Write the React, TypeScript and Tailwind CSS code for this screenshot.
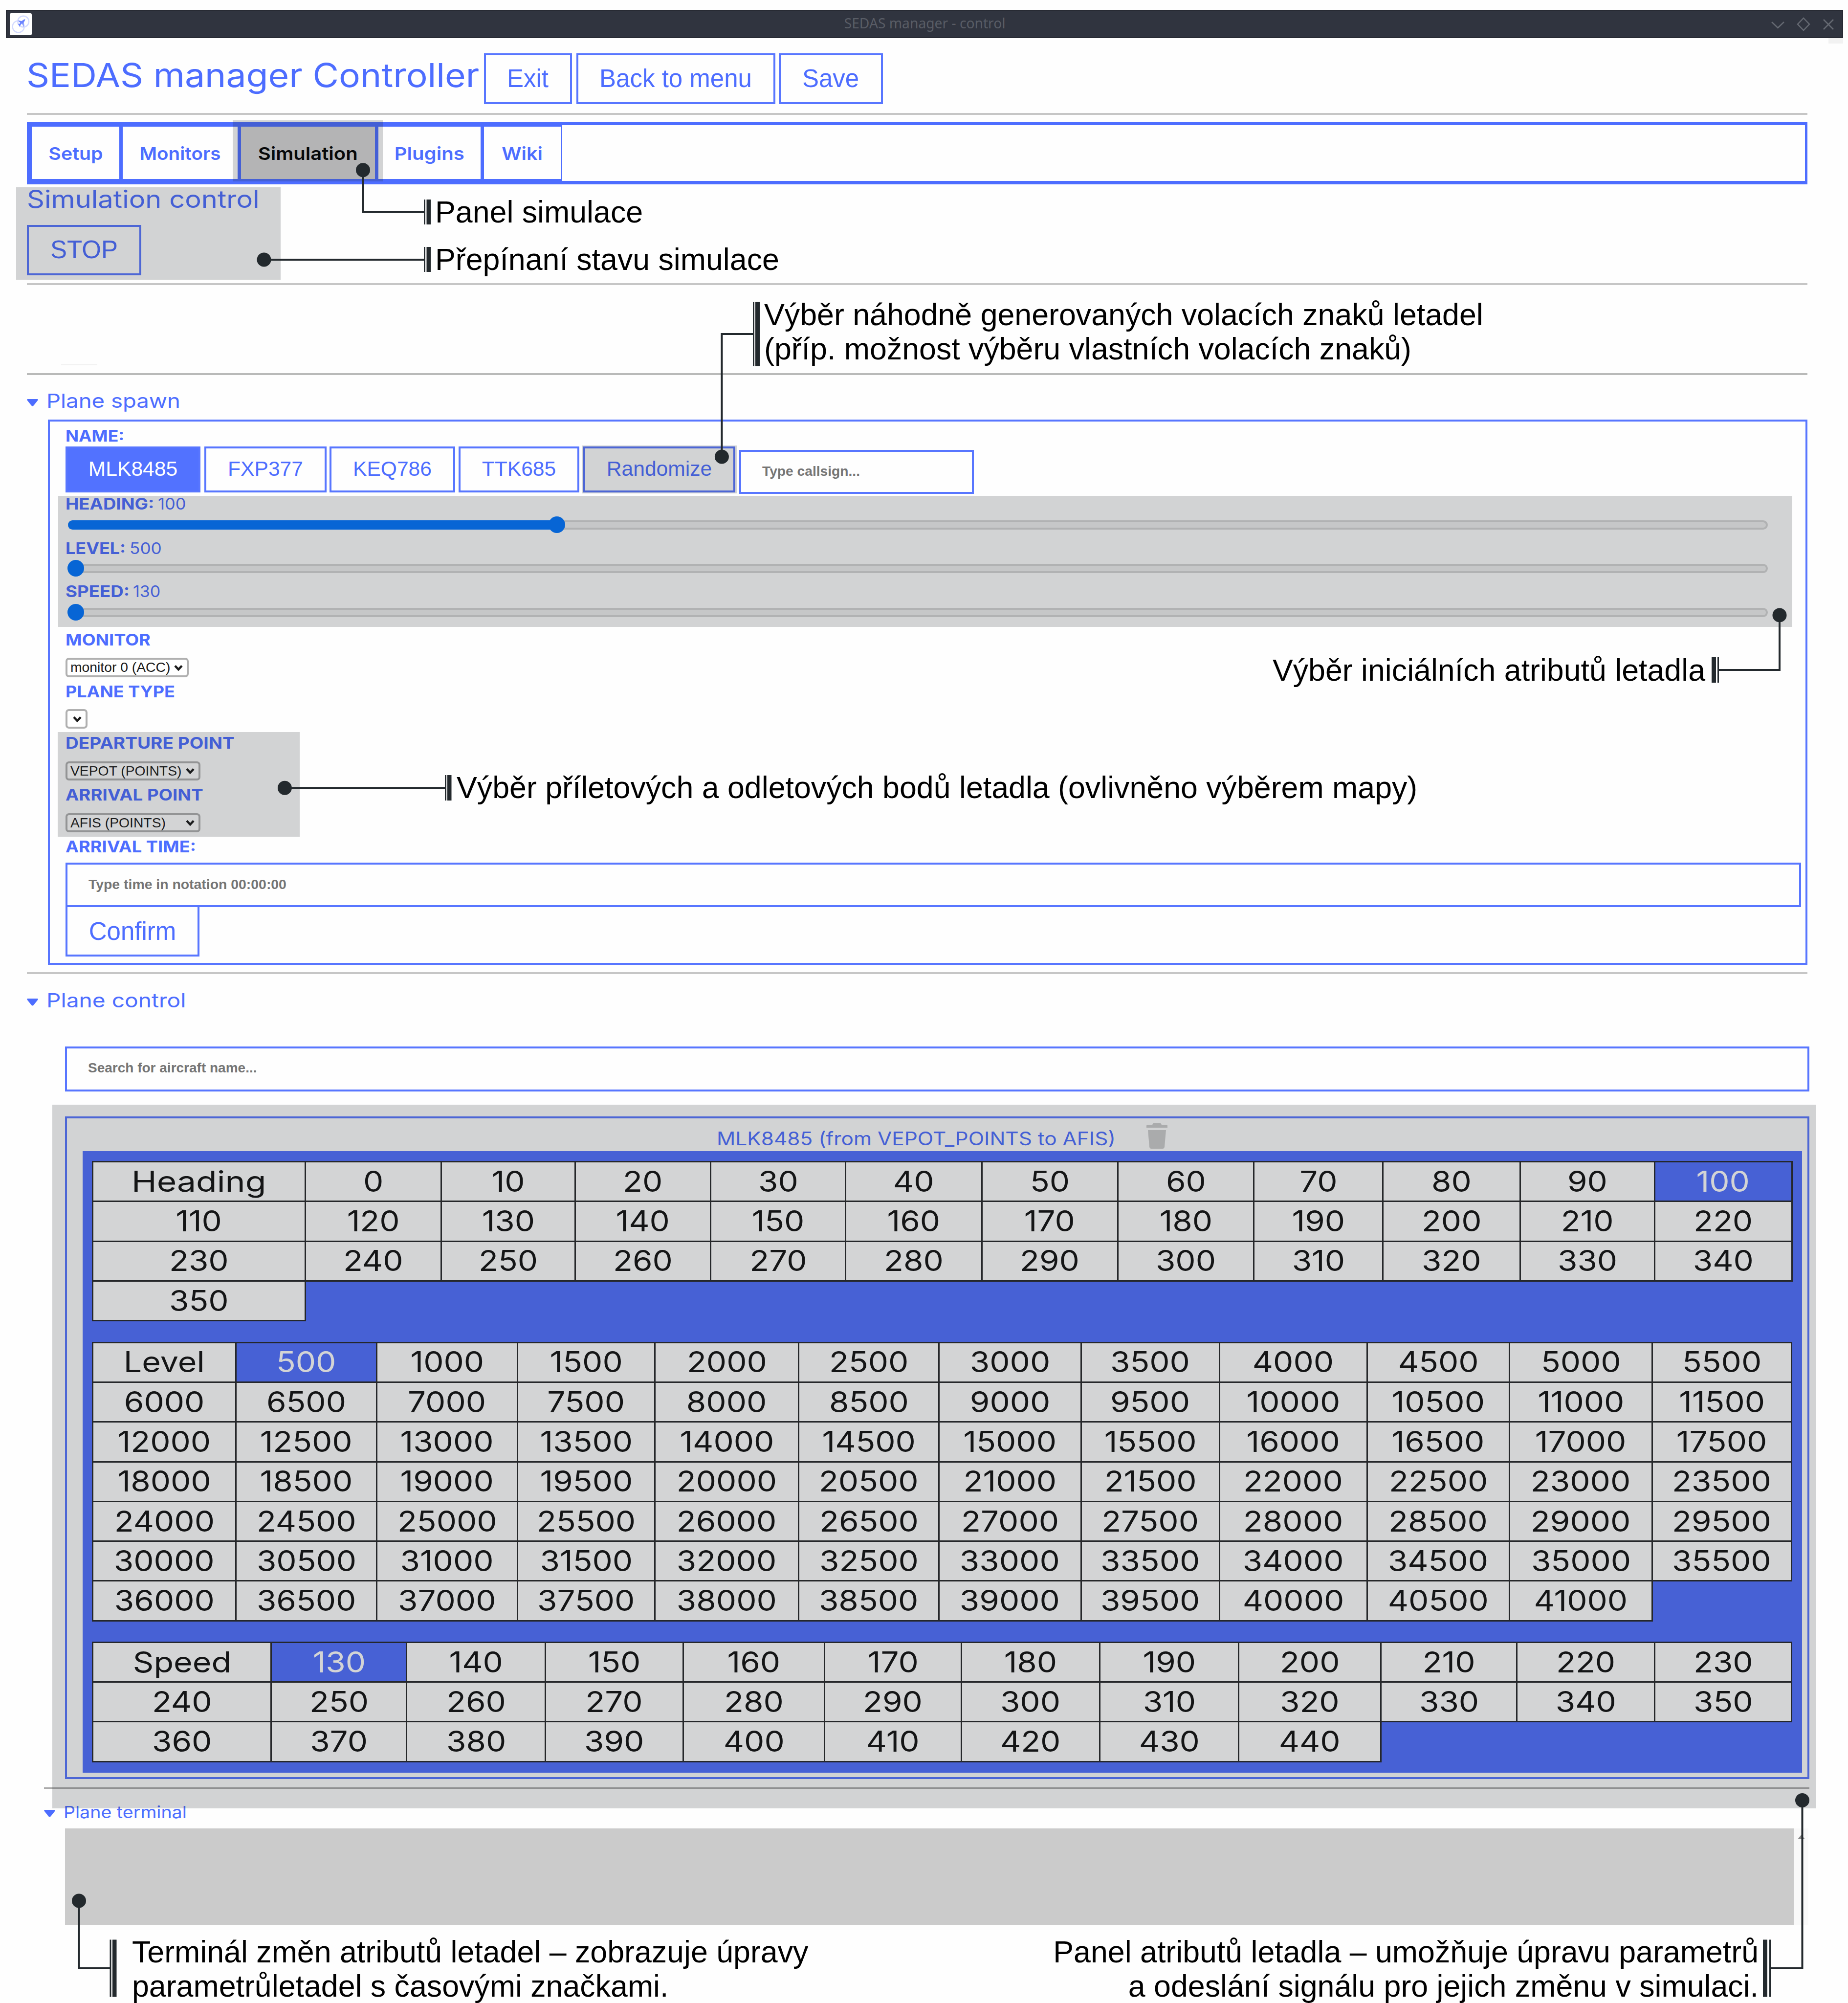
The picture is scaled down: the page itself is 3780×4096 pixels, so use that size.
import React from 'react';

const HEADING = ['Heading', ...Array.from({ length: 36 }, (_, i) => String(i * 10))];
const LEVEL = ['Level', ...Array.from({ length: 82 }, (_, i) => String(500 + i * 500))];
const SPEED = ['Speed', ...Array.from({ length: 32 }, (_, i) => String(130 + i * 10))];

function Rule({ className = 'bg-[#c6c6c6]' }: { className?: string }) {
  return <div className={`ml-[55px] h-[4px] w-[3642px] shrink-0 ${className}`} />;
}

function Button({ className = '', children }: { className?: string; children: React.ReactNode }) {
  return (
    <button
      className={`flex shrink-0 items-center justify-center border-4 border-[#5876ff] font-['Liberation_Sans',Arial,sans-serif] whitespace-nowrap ${className}`}
    >
      {children}
    </button>
  );
}

function Tab({ label, className = '', textClass }: { label: string; className?: string; textClass: string }) {
  return (
    <div
      className={`flex shrink-0 items-center justify-center border-t-3 border-r-3 border-b-4 border-l-4 border-[#4d6dff] pt-[3px] text-[36px] font-semibold ${className}`}
    >
      <span className={textClass}>{label}</span>
    </div>
  );
}

function Summary({ label, textClass, className }: { label: string; textClass: string; className: string }) {
  return (
    <div className={`flex shrink-0 items-center whitespace-nowrap text-[#4d6dff] ${className}`}>
      <svg className="mt-[6px] h-[15px] w-[23px] shrink-0" viewBox="0 0 23 15">
        <path d="M2 0H21Q24 0 22 3L14 13Q11.500 16 9 13L1 3Q-1 0 2 0Z" fill="#4d6dff" />
      </svg>
      <span className={`ml-[17px] origin-left ${textClass}`}>{label}</span>
    </div>
  );
}

function Label({ name, value, className = '', nameClass = 'w-[400px] scale-x-[1.13]', valueClass = '' }: {
  name: string; value?: string; className?: string; nameClass?: string; valueClass?: string;
}) {
  return (
    <div className={`flex h-[40px] shrink-0 text-[32px] leading-[42px] whitespace-nowrap text-[#4d6dff] ${className}`}>
      <span className={`origin-left font-bold ${nameClass}`}>{name}</span>
      {value && <span className={`origin-left ${valueClass}`}>{value}</span>}
    </div>
  );
}

function Slider({ className = '', fillClass, thumbClass }: { className?: string; fillClass: string; thumbClass: string }) {
  return (
    <div className={`relative ml-[5px] flex h-[36px] w-[3477px] shrink-0 items-center ${className}`}>
      <div className="h-[19px] w-full rounded-full border-4 border-[#d5d5d5] bg-[#efefef]" />
      <div className={`absolute left-0 h-[19px] rounded-full bg-[#0075ff] ${fillClass}`} />
      <div className={`absolute top-[1px] size-[34px] rounded-full bg-[#0075ff] ${thumbClass}`} />
    </div>
  );
}

function Select({ label = '', className = '' }: { label?: string; className?: string }) {
  return (
    <div
      className={`flex shrink-0 items-center justify-between rounded-[7px] border-4 border-[#b0b0b0] bg-white pr-[8px] pl-[6px] font-['Liberation_Sans',Arial,sans-serif] text-[28.300px] leading-[30px] whitespace-nowrap text-[#1a1a1a] ${className}`}
    >
      <span className="pb-[2px]">{label}</span>
      <svg className="mt-[1px] h-[14px] w-[18px]" viewBox="0 0 18 14" fill="none" stroke="#1a1a1a" strokeWidth="4.500">
        <path d="M2 2.500L9 10L16 2.500" />
      </svg>
    </div>
  );
}

function ValueGrid({ items, selected, className }: { items: string[]; selected: string; className: string }) {
  return (
    <div className={`ml-[19px] grid w-max shrink-0 ${className}`}>
      {items.map((v, i) => (
        <div
          key={v}
          className={`-mr-[3px] -mb-[3px] flex items-center justify-center border-3 border-[#26272a] pb-px text-[59px] leading-[70px] ${
            v === selected ? 'bg-[#5070ff] text-white' : 'bg-white text-[#111]'
          }`}
        >
          <span className={i === 0 ? (v === 'Heading' ? 'scale-x-[1.180]' : 'scale-x-[1.125]') : 'scale-x-[1.110]'}>{v}</span>
        </div>
      ))}
    </div>
  );
}

function Shade({ className }: { className: string }) {
  return <div className={`absolute bg-[#23292d]/20 ${className}`} />;
}

function Note({ className, children }: { className: string; children: React.ReactNode }) {
  return (
    <div className={`absolute font-['Liberation_Sans',Arial,sans-serif] text-[62.700px] leading-[70px] whitespace-nowrap text-black ${className}`}>
      {children}
    </div>
  );
}

function Callouts() {
  return (
    <svg className="absolute inset-0 h-[4096px] w-[3780px]" viewBox="0 0 3780 4096" fill="none" stroke="#23292d" strokeWidth="4">
      <g fill="#23292d" stroke="none">
        <circle cx="742.500" cy="347.700" r="14.500" />
        <circle cx="540" cy="531" r="14.500" />
        <circle cx="1476.400" cy="934" r="14.500" />
        <circle cx="3640" cy="1258" r="14.500" />
        <circle cx="582.400" cy="1611.300" r="14.500" />
        <circle cx="161.500" cy="3887" r="14.500" />
        <circle cx="3686.500" cy="3681.500" r="14.500" />
        <path d="M872.500 408h8.500v51h-8.500zM872.500 505h8.500v51h-8.500zM1545 617.500h9V749h-9zM3501 1344h9v52h-9zM915 1585h8.500v52H915zM230 3966.500h8.500v117H230zM3606 3966.500h9v117h-9z" />
        <path d="M867 408h3v51h-3zM867 505h3v51h-3zM1540 617.500h3V749h-3zM3513 1344h3v52h-3zM910 1585h3v52h-3zM224.500 3966.500h3v117h-3zM3619 3966.500h3v117h-3z" />
      </g>
      <path d="M742.500 348V433.500H868" />
      <path d="M540 531H868" />
      <path d="M1476.400 934V683H1541" />
      <path d="M3640 1258V1370H3515" />
      <path d="M582 1611.300H911" />
      <path d="M161.500 3887V4025H225" />
      <path d="M3686.500 3681V4025H3621" />
    </svg>
  );
}

export default function App() {
  return (
    <div className="relative flex h-[4096px] w-[3780px] flex-col overflow-hidden bg-[#fefefe] font-['Inter',sans-serif] text-[#4d6dff]">
      {/* Window title bar */}
      <div className="relative mt-[20px] ml-[12px] flex h-[58px] w-[3758px] shrink-0 items-center justify-between bg-[#30343f] shadow-[inset_0_0_0_2px_#272a33]">
        <svg className="ml-[8px] size-[45px]" viewBox="32 36 143 143">
          <rect x="32" y="36" width="143" height="143" rx="10" fill="#fff" />
          <g fill="none" stroke="#d3daff" strokeWidth="8">
            <circle cx="120" cy="90" r="36" />
            <circle cx="88" cy="123" r="38" />
          </g>
          <path d="M132 74L122 78L108 88L84 84L100 98L94 106L82 104L92 113L96 126L102 112L112 102L122 128L122 98L130 84Z" fill="#6b83ff" />
        </svg>
        <div className="ml-[96px] scale-x-[.99] pb-[4px] font-['Noto_Sans',sans-serif] text-[28.500px] leading-[58px] whitespace-nowrap text-[#595d66]">
          SEDAS manager - control
        </div>
        <svg className="mr-[18px] h-[28px] w-[130px]" viewBox="0 0 130 28" fill="none" stroke="#666a73" strokeWidth="2.500">
          <path d="M2 10L14.500 22L27 10" />
          <path d="M67 2L79 14.500L67 27L55 14.500Z" />
          <path d="M108 5L128 25M128 5L108 25" />
        </svg>
        <div className="absolute top-[58px] right-0 h-[11px] w-[30px] bg-[#f2f2f2]" />
      </div>

      {/* Page header */}
      <div className="mt-[31px] ml-[54px] flex h-[104px] shrink-0 items-start">
        <h1 className="w-[935.500px] shrink-0 text-[67.500px] leading-[90px] whitespace-nowrap">
          <span className="inline-block origin-left scale-x-[1.086]">SEDAS manager Controller</span>
        </h1>
        <Button className="h-[104px] w-[180px] text-[51px]">Exit</Button>
        <Button className="ml-[9px] h-[104px] w-[407px] text-[51px]">Back to menu</Button>
        <Button className="ml-[7px] h-[104px] w-[213px] text-[51px]">Save</Button>
      </div>
      <Rule className="mt-[18px] bg-[#c6c6c6]" />

      {/* Tabs */}
      <div className="mt-[15px] ml-[55px] flex h-[127px] w-[3642px] shrink-0 border-t-6 border-r-5 border-b-7 border-l-6 border-[#4d6dff]">
        <Tab label="Setup" className="w-[186px]" textClass="scale-x-[1.091]" />
        <Tab label="Monitors" className="w-[242px]" textClass="scale-x-[1.071]" />
        <Tab label="Simulation" className="w-[281px] bg-[#d9d7d7] text-black" textClass="scale-x-[1.111]" />
        <Tab label="Plugins" className="w-[216px]" textClass="scale-x-[1.114]" />
        <Tab label="Wiki" className="w-[164px]" textClass="scale-x-[1.099]" />
      </div>

      {/* Simulation control */}
      <h2 className="ml-[55px] h-[60px] shrink-0 text-[50px] leading-[60px] whitespace-nowrap">
        <span className="inline-block origin-left scale-x-[1.121]">Simulation control</span>
      </h2>
      <Button className="mt-[23px] ml-[55px] h-[103px] w-[234px] text-[51px]">STOP</Button>
      <Rule className="mt-[16px] bg-[#c6c6c6]" />
      <div className="mt-[162px] ml-[125px] h-[2px] w-[74px] shrink-0 bg-[#f0f0f0]" />
      <Rule className="mt-[16px] bg-[#b9bab9]" />

      {/* Plane spawn */}
      <Summary label="Plane spawn" className="mt-[23px] ml-[55px] h-[60px] text-[40px] leading-[60px]" textClass="scale-x-[1.138]" />
      <div className="mt-[8px] ml-[98px] flex h-[1115px] w-[3599px] shrink-0 flex-col border-4 border-[#5876ff] pl-[32px]">
        <Label name="NAME:" className="mt-[9px]" nameClass="scale-x-[1.110]" />
        <div className="mt-[2px] flex h-[97px] shrink-0 text-[42.600px]">
          <Button className="h-[94px] w-[276px] bg-[#5272ff] pb-[2px] text-white">MLK8485</Button>
          <Button className="ml-[8px] h-[94px] w-[250px] pb-[2px]">FXP377</Button>
          <Button className="ml-[6px] h-[94px] w-[257px] pb-[2px]">KEQ786</Button>
          <Button className="ml-[7px] h-[94px] w-[247px] pb-[2px]">TTK685</Button>
          <Button className="ml-[8px] h-[94px] w-[311px] pb-[2px]">Randomize</Button>
          <div className="mt-[7px] ml-[8px] flex h-[90px] w-[480px] items-center border-4 border-[#5876ff] pb-[3px] pl-[43px] font-['Liberation_Sans',Arial,sans-serif] text-[28.200px] font-bold text-[#757575]">
            Type callsign...
          </div>
        </div>
        <Label name="HEADING:" value="100" nameClass="w-[189px] scale-x-[1.144]" valueClass="scale-x-[1.074]" />
        <Slider className="mt-[5px]" fillClass="w-[1000px]" thumbClass="left-[983px]" />
        <Label name="LEVEL:" value="500" className="mt-[10px]" nameClass="w-[131px] scale-x-[1.123]" valueClass="scale-x-[1.100]" />
        <Slider className="mt-[3px]" fillClass="w-[15px]" thumbClass="-left-[1px]" />
        <Label name="SPEED:" value="130" className="mt-[9px]" nameClass="w-[138px] scale-x-[1.146]" valueClass="scale-x-[1.063]" />
        <Slider className="mt-[5px]" fillClass="w-[15px]" thumbClass="-left-[1px]" />
        <Label name="MONITOR" className="mt-[18px]" />
        <Select label="monitor 0 (ACC)" className="mt-[17px] h-[40px] w-[252px]" />
        <Label name="PLANE TYPE" className="mt-[9px]" nameClass="w-[400px] scale-x-[1.123]" />
        <Select className="mt-[16px] h-[40px] w-[45px]" />
        <Label name="DEPARTURE POINT" className="mt-[9px]" nameClass="w-[400px] scale-x-[1.158]" />
        <Select label="VEPOT (POINTS)" className="mt-[18px] h-[39px] w-[276px]" />
        <Label name="ARRIVAL POINT" className="mt-[9px]" nameClass="w-[400px] scale-x-[1.145]" />
        <Select label="AFIS (POINTS)" className="mt-[18px] h-[39px] w-[276px]" />
        <Label name="ARRIVAL TIME:" className="mt-[9px]" nameClass="w-[400px] scale-x-[1.130]" />
        <div className="mt-[13px] flex h-[91px] w-[3550px] shrink-0 items-center border-4 border-[#5876ff] pb-[3px] pl-[43px] font-['Liberation_Sans',Arial,sans-serif] text-[28.400px] font-bold text-[#757575]">
          Type time in notation 00:00:00
        </div>
        <Button className="-mt-[4px] h-[105px] w-[274px] pt-[3px] text-[51px]">Confirm</Button>
      </div>
      <Rule className="mt-[15px] bg-[#c6c6c6]" />

      {/* Plane control */}
      <Summary label="Plane control" className="mt-[24px] ml-[55px] h-[60px] text-[40px] leading-[60px]" textClass="scale-x-[1.153]" />
      <div className="mt-[64px] ml-[133px] flex h-[92px] w-[3568px] shrink-0 items-center border-4 border-[#5876ff] pb-[4px] pl-[43px] font-['Liberation_Sans',Arial,sans-serif] text-[28px] font-bold text-[#757575]">
        <span className="origin-left">Search for aircraft name...</span>
      </div>
      <div className="mt-[51px] ml-[133px] flex h-[1355px] w-[3568px] shrink-0 flex-col border-4 border-[#5876ff]">
        <div className="flex h-[67px] shrink-0 items-start pl-[1329px]">
          <div className="mt-[21px] w-[879px] text-[38px] leading-[40px] whitespace-nowrap">
            <span className="inline-block origin-left scale-x-[1.115]">MLK8485 (from VEPOT_POINTS to AFIS)</span>
          </div>
          <svg className="mt-[10px] h-[52px] w-[43px]" viewBox="0 0 43 52" fill="#ccc">
            <path d="M0 9V5Q0 3 2 3H12L14 0H29L31 3H41Q43 3 43 5V9ZM3 14H40L37 48Q36.500 52 33 52H10Q6.500 52 6 48Z" />
          </svg>
        </div>
        <div className="ml-[32px] flex h-[1271px] w-[3517px] shrink-0 flex-col gap-[44.500px] bg-[#5070ff] pt-[20px]">
          <ValueGrid
            items={HEADING}
            selected="100"
            className="auto-rows-[81.300px] grid-cols-[434.5px_278.5px_274px_277px_276px_278.5px_278.5px_278px_264px_281px_274.5px_281px]"
          />
          <ValueGrid
            items={LEVEL}
            selected="500"
            className="auto-rows-[81.300px] grid-cols-[293px_288px_288px_281px_294px_287px_290.5px_283.5px_301.5px_291.5px_292px_284.5px]"
          />
          <ValueGrid
            items={SPEED}
            selected="130"
            className="auto-rows-[81.100px] grid-cols-[365.3px_277.2px_283.3px_282px_289.3px_279.6px_283.3px_284.5px_290.5px_278.4px_282.1px_279.6px]"
          />
        </div>
      </div>
      <div className="mt-[17px] ml-[90px] h-[3px] w-[3611px] shrink-0 bg-[#aaaaaa]" />

      {/* Plane terminal */}
      <Summary label="Plane terminal" className="mt-[22px] ml-[90px] h-[50px] text-[34px] leading-[51px]" textClass="scale-x-[1.105]" />
      <div className="mt-[9px] ml-[133px] flex h-[198px] w-[3566px] shrink-0 justify-between bg-[#cbcbcb]">
        <div />
        <div className="flex w-[30px] justify-center bg-[#f9f9f9] pt-[13px]">
          <svg className="h-[9px] w-[15px]" viewBox="0 0 15 9">
            <path d="M7.500 0L15 9H0Z" fill="#8a8a8a" />
          </svg>
        </div>
      </div>

      {/* Highlighted areas */}
      <Shade className="top-[246px] left-[476px] h-[125px] w-[307px]" />
      <Shade className="top-[383px] left-[33px] h-[189px] w-[541px]" />
      <Shade className="top-[911px] left-[1190px] h-[98px] w-[318px]" />
      <Shade className="top-[1014px] left-[119px] h-[268px] w-[3547px]" />
      <Shade className="top-[1497px] left-[118px] h-[214px] w-[495px]" />
      <Shade className="top-[2259px] left-[107px] h-[1439px] w-[3608px]" />

      <Callouts />
      <Note className="top-[398px] left-[890px]">Panel simulace</Note>
      <Note className="top-[495px] left-[890px]">Přepínaní stavu simulace</Note>
      <Note className="top-[608px] left-[1563px]">
        Výběr náhodně generovaných volacích znaků letadel
        <br />
        (příp. možnost výběru vlastních volacích znaků)
      </Note>
      <Note className="top-[1335px] right-[292px]">Výběr iniciálních atributů letadla</Note>
      <Note className="top-[1575px] left-[934px]">Výběr příletových a odletových bodů letadla (ovlivněno výběrem mapy)</Note>
      <Note className="top-[3956px] left-[270px]">
        Terminál změn atributů letadel – zobrazuje úpravy
        <br />
        parametrůletadel s časovými značkami.
      </Note>
      <Note className="top-[3956px] right-[183px] text-right">
        Panel atributů letadla – umožňuje úpravu parametrů
        <br />a odeslání signálu pro jejich změnu v simulaci.
      </Note>
    </div>
  );
}
